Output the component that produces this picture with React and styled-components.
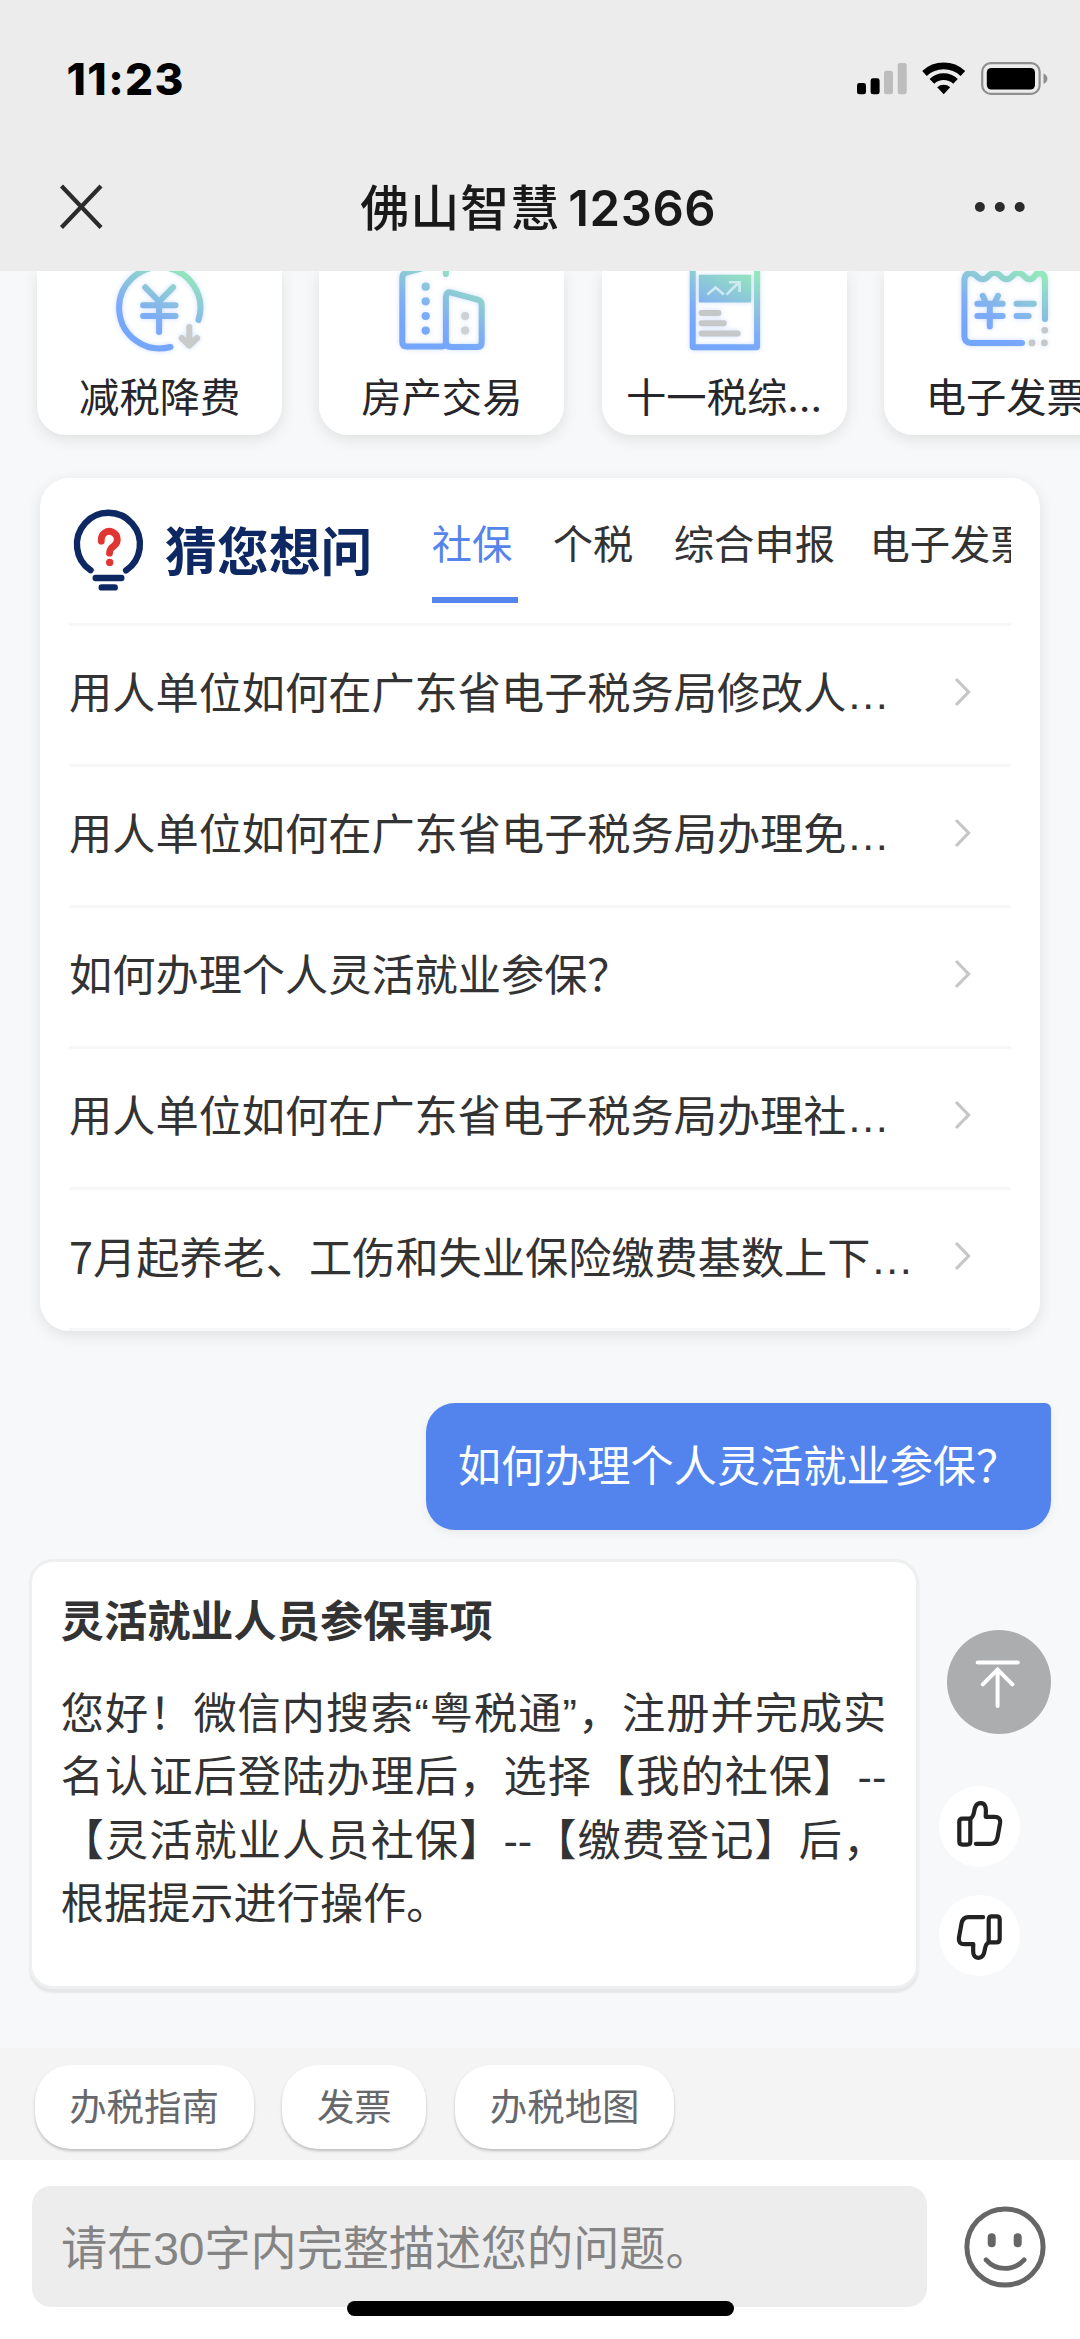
import React from "react";
import styled, { createGlobalStyle, css } from "styled-components";

const CJK = `"Noto Sans CJK SC", "Noto Sans", sans-serif`;

const GlobalStyle = createGlobalStyle`
  *, *::before, *::after { box-sizing: border-box; }
  html, body { margin: 0; padding: 0; }
  body {
    background: #f7f8fa;
    font-family: ${CJK};
    color: #333;
    text-spacing-trim: space-all;
  }
`;

const Screen = styled.div`
  position: relative;
  display: flex;
  flex-direction: column;
  width: 1080px;
  height: 2339px;
  overflow: hidden;
  background: #f7f8fa;
`;

/* ---------- header ---------- */

const Header = styled.header`
  flex: none;
  height: 271px;
  padding-top: 16px;
  background: #ececec;
`;

const StatusBar = styled.div`
  display: flex;
  align-items: center;
  justify-content: space-between;
  height: 126px;
  padding: 0 32px 0 66.5px;
`;

const Clock = styled.time`
  font: 800 44px/44px Inter, sans-serif;
  letter-spacing: 1.4px;
  color: #000;
`;

const NavBar = styled.nav`
  display: flex;
  align-items: center;
  justify-content: space-between;
  height: 129px;
  padding: 0 55px 0 56px;
`;

const Title = styled.h1`
  display: flex;
  align-items: baseline;
  gap: 8px;
  margin: 0 0 0 -6.5px;
  font: 500 49px/60px ${CJK};
  letter-spacing: 1px;
  color: #191919;
`;

const TitleNumber = styled.span`
  font: 600 49px/60px Inter, sans-serif;
  letter-spacing: 0.6px;
`;

const Glyph = styled.svg`
  display: block;
  flex: none;
`;

/* ---------- service cards ---------- */

const Services = styled.section`
  flex: none;
  display: flex;
  gap: 37.2px;
  height: 207px;
  padding-left: 37.2px;
  overflow: hidden;
`;

const ServiceCard = styled.article`
  flex: none;
  display: flex;
  flex-direction: column;
  align-items: center;
  width: 245px;
  height: 164px;
  border-radius: 0 0 29px 29px;
  background: #fff;
  box-shadow: 0 4px 14px rgba(60, 60, 40, 0.13);
`;

const ServiceLabel = styled.span`
  margin-top: 4px;
  font-size: 40.3px;
  line-height: 60px;
  white-space: nowrap;
  color: #26262b;
`;

const Dots = styled.span`
  font-family: ${(p) => (p.$wide ? `"Liberation Sans"` : "Inter")}, sans-serif;
`;

/* ---------- suggested questions ---------- */

const Panel = styled.section`
  flex: none;
  height: 853px;
  margin: 0 40.3px;
  padding: 0 28.8px;
  border-radius: 29px;
  background: #fff;
  box-shadow: 0 4px 14px rgba(60, 60, 40, 0.12);
`;

const PanelHead = styled.div`
  display: flex;
  height: 144.5px;
`;

const BulbBox = styled.div`
  flex: none;
  margin: 30px 0 0 2px;
`;

const PanelTitle = styled.h2`
  width: 208px;
  margin: 33px 0 0 20px;
  font: 700 51.8px/76px ${CJK};
  color: #0d2863;
  white-space: nowrap;
`;

const Tabs = styled.div`
  flex: 1;
  min-width: 0;
  display: flex;
  gap: 34.6px;
  margin-left: 58.7px;
  overflow: hidden;
`;

const Tab = styled.span`
  flex: none;
  min-width: 86.4px;
  height: 124.5px;
  padding-top: 34px;
  font-size: 40.3px;
  line-height: 60px;
  white-space: nowrap;
  border-bottom: 6px solid transparent;
  ${(p) =>
    p.$active &&
    css`
      color: #5584ec;
      border-bottom-color: #5584ec;
    `}
`;

const QuestionRow = styled.div`
  display: flex;
  align-items: center;
  justify-content: space-between;
  height: 141.15px;
  padding-right: 38px;
  border-top: 3px solid #f7f7f7;

  &:last-child {
    height: 144px;
    border-bottom: 3px solid #f7f7f7;
  }
`;

const QuestionText = styled.span`
  height: 64px;
  font-size: 43.2px;
  line-height: 64px;
  margin-top: -9px;
  white-space: nowrap;
`;

const ChevronBox = styled.span`
  margin-top: -6px;
`;

/* ---------- conversation ---------- */

const Chat = styled.main`
  flex: none;
  height: 717px;
  padding-top: 72px;
`;

const UserBubble = styled.div`
  width: 624.6px;
  height: 126.6px;
  margin-left: 426.4px;
  padding: 28px 31.4px;
  border-radius: 29px 6px 29px 29px;
  background: #5384ed;
  box-shadow: 0 3px 8px rgba(60, 60, 40, 0.08);
  color: #fff;
  font-size: 43.2px;
  line-height: 64px;
  white-space: nowrap;
`;

const AnswerRow = styled.div`
  display: flex;
  align-items: flex-start;
  margin: 29px 0 0 29px;
`;

const AnswerCard = styled.article`
  width: 890px;
  height: 430px;
  padding: 24px 30px 0 28.8px;
  border: 3px solid #eeefef;
  border-radius: 24px;
  background: #fff;
  box-shadow: 0 4px 2px rgba(0, 0, 0, 0.07);
`;

const AnswerTitle = styled.h3`
  height: 64px;
  margin: 0 0 29.3px;
  font: 700 43.2px/64px ${CJK};
`;

const AnswerLine = styled.p`
  width: 825.5px;
  height: 63.5px;
  margin: 0;
  font-size: 43.2px;
  line-height: 63.5px;
  white-space: nowrap;
  text-align: ${(p) => (p.$last ? "left" : "justify")};
  text-align-last: ${(p) => (p.$last ? "left" : "justify")};
`;

const Latin = styled.span`
  font-family: "Liberation Sans", sans-serif;
  line-height: 1;
`;

const Actions = styled.aside`
  display: flex;
  flex-direction: column;
  align-items: flex-start;
  padding: 71px 0 0 20.3px;
`;

const RoundButton = styled.button`
  display: flex;
  align-items: center;
  justify-content: center;
  width: ${(p) => p.$size}px;
  height: ${(p) => p.$size}px;
  margin: ${(p) => p.$gap}px 0 0 ${(p) => p.$indent}px;
  padding: 0;
  border: 0;
  border-radius: 50%;
  background: ${(p) => p.$bg};
`;

/* ---------- bottom ---------- */

const ChipBar = styled.div`
  flex: none;
  display: flex;
  gap: 28.8px;
  height: 112px;
  padding: 17px 34.6px 0;
  background: #f4f4f4;
`;

const Chip = styled.span`
  height: 84px;
  padding: 0 34.6px;
  border-radius: 36px;
  background: #fff;
  box-shadow: 0 2px 3px rgba(0, 0, 0, 0.22);
  font-size: 37.45px;
  line-height: 81px;
  white-space: nowrap;
  color: #66686c;
`;

const Composer = styled.div`
  flex: none;
  display: flex;
  align-items: flex-start;
  height: 179px;
  padding: 26px 0 0 32px;
  background: #fff;
`;

const Field = styled.div`
  flex: none;
  width: 895.2px;
  height: 121px;
  padding-left: 29px;
  border-radius: 19px;
  background: #ededed;
  font-size: 46.1px;
  line-height: 119px;
  white-space: nowrap;
  color: #848484;
`;

const Digits = styled.span`
  font-family: "Liberation Sans", sans-serif;
`;

const SmileBox = styled.div`
  margin: 19px 0 0 36px;
`;

const HomeIndicator = styled.div`
  position: absolute;
  left: 347px;
  bottom: 23px;
  width: 387px;
  height: 15px;
  border-radius: 8px;
  background: #000;
`;

/* ---------- drawings ---------- */

const SystemIcons = () => (
  <Glyph width="192" height="34" viewBox="856 62 192 34">
    <rect x="857" y="83" width="9" height="11.3" rx="2.4" />
    <rect x="870.6" y="78.3" width="9" height="16" rx="2.4" />
    <rect x="884" y="70.8" width="9" height="23.5" rx="2.4" fill="#bdbdbd" />
    <rect x="897.7" y="63" width="9" height="31.3" rx="2.4" fill="#bdbdbd" />
    <g fill="none" stroke="#000" strokeWidth="6.8">
      <path d="M924.5 73.4A28.4 28.4 0 0 1 962.9 73.4" />
      <path d="M931.9 81.4A17.2 17.2 0 0 1 955.5 81.4" />
    </g>
    <path d="M943.7 94.3L937.2 87.2A9.8 9.8 0 0 1 950.2 87.2Z" />
    <rect x="982.2" y="63.2" width="57.4" height="30.6" rx="8.5" fill="none" stroke="#8f8f8f" strokeWidth="2.2" />
    <rect x="986.8" y="68" width="48.2" height="21.5" rx="4.5" />
    <path d="M1043.5 73.6Q1047.4 75.4 1047.4 78.8T1043.5 84Z" fill="#8f8f8f" />
  </Glyph>
);

const CloseIcon = () => (
  <Glyph width="52" height="52" viewBox="0 0 52 52" stroke="#2b2b2b" strokeWidth="4.2">
    <path d="M5.5 5L45 46.5M45 5L5.5 46.5" />
  </Glyph>
);

const MoreIcon = () => (
  <Glyph width="50" height="14" viewBox="0 0 50 14" fill="#2b2b2b">
    <circle cx="4.9" cy="7" r="5" />
    <circle cx="24.8" cy="7" r="5" />
    <circle cx="44.7" cy="7" r="5" />
  </Glyph>
);

const ServiceGlyph = styled(Glyph)`
  filter: drop-shadow(0 0 2.5px rgba(116, 160, 251, 0.35));
`;

const ServiceIcon = ({ x, id, children }) => (
  <ServiceGlyph
    width="100"
    height="90"
    viewBox={`${x} 271 100 90`}
    fill="none"
    stroke={`url(#${id})`}
    strokeWidth="6"
    strokeLinecap="round"
    strokeLinejoin="round"
  >
    <defs>
      <linearGradient id={id} gradientUnits="userSpaceOnUse" x1={x + 36} y1="338" x2={x + 68} y2="268">
        <stop offset="0" stopColor="#74a6fb" />
        <stop offset="0.28" stopColor="#7facf6" />
        <stop offset="0.62" stopColor="#8cc6da" />
        <stop offset="1" stopColor="#93e8ba" />
      </linearGradient>
    </defs>
    {children}
  </ServiceGlyph>
);

const TaxCutIcon = () => (
  <ServiceIcon x={109.7} id="gTax">
    <path d="M198.2 320A40.6 40.6 0 1 0 170.2 347" />
    <path d="M145 287.3L158.8 301.5L172.8 287.3M142.8 305.3H175.2M142.8 316H175.2M158.8 301.5V332" />
    <path d="M189 327V345.5M181.4 338L189 345.5L196.8 338" stroke="#c9cbcb" />
  </ServiceIcon>
);

const EstateIcon = () => (
  <ServiceIcon x={391.9} id="gEst">
    <path d="M445.8 274V262L406 272.6Q402.2 273.6 402.2 278V342Q402.2 346.5 406.5 346.5H441.5Q445.8 346.5 445.8 342V297Q445.8 291.2 451.2 292.6L477.6 299.6Q481.6 300.7 481.6 305V342.2Q481.6 347 477.4 347H451Q445.8 347 445.8 342" />
    <g stroke="none" fill="url(#gEst)">
      <circle cx="425.6" cy="286.7" r="4.1" />
      <circle cx="425.6" cy="301.3" r="4.1" />
      <circle cx="425.6" cy="316" r="4.1" />
      <circle cx="425.6" cy="330.6" r="4.1" />
    </g>
    <g stroke="none" fill="#cfd0d2">
      <circle cx="465" cy="316" r="4" />
      <circle cx="465" cy="330.6" r="4" />
    </g>
  </ServiceIcon>
);

const ReportIcon = () => (
  <ServiceIcon x={674.6} id="gRep">
    <rect x="693.3" y="262" width="64.4" height="85.2" rx="0.8" />
    <rect x="699.4" y="274.7" width="52.4" height="27.8" rx="1" fill="url(#gRep)" stroke="none" />
    <path d="M708 294.6L716.2 287.4L724.4 294.6M727 294.6L740 282M729.5 282.3H740.2V292" stroke="#cdeaf3" strokeWidth="2.6" strokeLinecap="butt" strokeLinejoin="miter" />
    <path d="M702.3 313H719M702.3 323.2H724.4M702.3 333.6H738.3" stroke="#c6c7c8" />
  </ServiceIcon>
);

const InvoiceIcon = () => (
  <ServiceIcon x={956.6} id="gInv">
    <path d="M1022.6 342.9H972Q965 342.9 965 336V280.5Q965 273.2 972 273.2C977 273.2 977.5 279.2 983.3 279.2C989.5 279.2 989 272.8 995 272.8C1001 272.8 1001 279.2 1007 279.2C1013 279.2 1013 272.8 1018.7 272.8C1024.5 272.8 1024.5 279.2 1030.4 279.2C1036 279.2 1035 273 1039.6 273Q1045.6 273.4 1045.6 280.5V319" />
    <path d="M983.4 295.8L986.8 303.4M998.6 295.8L995 303.4M978 303.7H1003.2M978 316H1003.2M990.4 304V326.5M1017.2 303.7H1034.4M1017.2 316H1029.2" />
    <g stroke="none" fill="#c6c7c8">
      <circle cx="1045.4" cy="330.3" r="3.3" />
      <circle cx="1032.6" cy="342.9" r="3.3" />
      <circle cx="1045" cy="342.9" r="3.3" />
    </g>
  </ServiceIcon>
);

const BulbIcon = () => (
  <Glyph width="74" height="85" viewBox="71.5 508 74 85" fill="none" stroke="#0d2863" strokeWidth="6.4" strokeLinecap="round">
    <path d="M91 570.2A31.5 31.5 0 1 1 126.6 570.4" />
    <path d="M96.2 578H121.8M102.2 587.4H115.2" />
    <path d="M101.8 541.2V539.8A8 8 0 1 1 114.8 545.6Q110 548.6 110 553.2" stroke="#df3634" strokeWidth="6.8" />
    <circle cx="110.2" cy="562.4" r="3.7" fill="#df3634" stroke="none" />
  </Glyph>
);

const Chevron = () => (
  <Glyph width="20" height="32" viewBox="0 0 20 32" fill="none" stroke="#c6c6c6" strokeWidth="3.2">
    <path d="M3 3L15.6 16L3 29" />
  </Glyph>
);

const TopIcon = () => (
  <Glyph width="104" height="104" viewBox="947.2 1630 104 104" fill="none" stroke="#fff" strokeWidth="4" strokeLinecap="round">
    <path d="M977.8 1662.4H1018M997.8 1670V1706M983 1684.4L997.8 1669.6L1012.6 1684.4" />
  </Glyph>
);

const LikeIcon = ({ flipped }) => (
  <Glyph width="81" height="81" viewBox="939.5 1786 81 81" fill="none" stroke="#222" strokeWidth="4.2" strokeLinecap="round" strokeLinejoin="round">
    <g transform={flipped ? "rotate(180 980 1826)" : undefined}>
      <path d="M959.8 1822Q959.8 1818.6 963 1818.6H970.8V1841.5Q970.8 1844.6 967.6 1844.6H963Q959.8 1844.6 959.8 1841.5Z" />
      <path d="M970.8 1818.6C975.4 1816.6 974 1810 976 1806.6C978 1802.2 984.4 1801.8 986 1807C986.8 1810 986.2 1813.6 986.2 1816.8H995Q1001.4 1816.8 1000.6 1823L998 1837.4Q996.8 1843.8 991 1843.8H976.4" />
    </g>
  </Glyph>
);

const SmileIcon = () => (
  <Glyph width="84" height="84" viewBox="963.3 2204.6 84 84" fill="none" stroke="#666" strokeWidth="5" strokeLinecap="round">
    <circle cx="1005.3" cy="2246.6" r="38.1" />
    <path d="M986.4 2259.4Q994 2268 1005.3 2268T1024.4 2259.4" strokeWidth="4.8" />
    <path d="M992 2236.8V2242.8M1018 2236.8V2242.8" strokeWidth="8" />
  </Glyph>
);

const services = [
  { label: "减税降费", Icon: TaxCutIcon },
  { label: "房产交易", Icon: EstateIcon },
  { label: "十一税综", more: true, Icon: ReportIcon },
  { label: "电子发票", Icon: InvoiceIcon },
];

const tabs = ["社保", "个税", "综合申报", "电子发票"];

const questions = [
  { text: "用人单位如何在广东省电子税务局修改人", more: true },
  { text: "用人单位如何在广东省电子税务局办理免", more: true },
  { text: "如何办理个人灵活就业参保？" },
  { text: "用人单位如何在广东省电子税务局办理社", more: true },
  { text: "7月起养老、工伤和失业保险缴费基数上下", more: true },
];

const chips = ["办税指南", "发票", "办税地图"];

export default function App() {
  return (
    <>
      <GlobalStyle />
      <Screen>
        <Header>
          <StatusBar>
            <Clock>11:23</Clock>
            <SystemIcons />
          </StatusBar>
          <NavBar>
            <CloseIcon />
            <Title>
              佛山智慧<TitleNumber>12366</TitleNumber>
            </Title>
            <MoreIcon />
          </NavBar>
        </Header>

        <Services>
          {services.map(({ label, more, Icon }) => (
            <ServiceCard key={label}>
              <Icon />
              <ServiceLabel>
                {label}
                {more && <Dots>…</Dots>}
              </ServiceLabel>
            </ServiceCard>
          ))}
        </Services>

        <Panel>
          <PanelHead>
            <BulbBox>
              <BulbIcon />
            </BulbBox>
            <PanelTitle>猜您想问</PanelTitle>
            <Tabs>
              {tabs.map((t, i) => (
                <Tab key={t} $active={i === 0}>
                  {t}
                </Tab>
              ))}
            </Tabs>
          </PanelHead>
          {questions.map(({ text, more }) => (
            <QuestionRow key={text}>
              <QuestionText>
                {text}
                {more && <Dots $wide>…</Dots>}
              </QuestionText>
              <ChevronBox>
                <Chevron />
              </ChevronBox>
            </QuestionRow>
          ))}
        </Panel>

        <Chat>
          <UserBubble>如何办理个人灵活就业参保？</UserBubble>
          <AnswerRow>
            <AnswerCard>
              <AnswerTitle>灵活就业人员参保事项</AnswerTitle>
              <AnswerLine>
                您好！微信内搜索<Latin>“</Latin>粤税通<Latin>”</Latin>，注册并完成实
              </AnswerLine>
              <AnswerLine>
                名认证后登陆办理后，选择【我的社保】<Latin>--</Latin>
              </AnswerLine>
              <AnswerLine>
                【灵活就业人员社保】<Latin>--</Latin>【缴费登记】后，
              </AnswerLine>
              <AnswerLine $last>根据提示进行操作。</AnswerLine>
            </AnswerCard>
            <Actions>
              <RoundButton $size={104} $gap={0} $indent={8} $bg="#acadaf">
                <TopIcon />
              </RoundButton>
              <RoundButton $size={81} $gap={52} $indent={0} $bg="#fff">
                <LikeIcon />
              </RoundButton>
              <RoundButton $size={81} $gap={28} $indent={0} $bg="#fff">
                <LikeIcon flipped />
              </RoundButton>
            </Actions>
          </AnswerRow>
        </Chat>

        <ChipBar>
          {chips.map((c) => (
            <Chip key={c}>{c}</Chip>
          ))}
        </ChipBar>
        <Composer>
          <Field>
            请在<Digits>30</Digits>字内完整描述您的问题。
          </Field>
          <SmileBox>
            <SmileIcon />
          </SmileBox>
        </Composer>
        <HomeIndicator />
      </Screen>
    </>
  );
}
